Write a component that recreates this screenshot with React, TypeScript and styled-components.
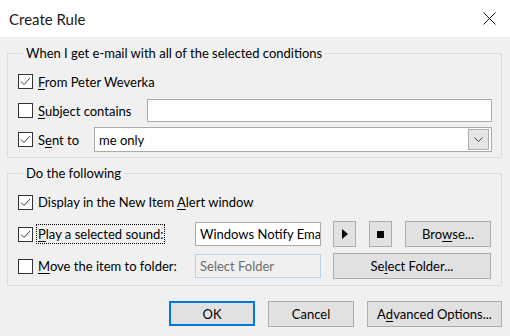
import React from 'react';
import styled, { createGlobalStyle } from 'styled-components';

const GlobalStyle = createGlobalStyle`
  html, body {
    margin: 0;
    padding: 0;
    background: #f0f0f0;
  }
  body {
    font-family: Lato, "Noto Sans", sans-serif;
    font-size: 13px;
    color: #000000;
  }
`;

const Window = styled.div`
  display: flex;
  flex-direction: column;
  width: 510px;
  height: 336px;
  background: #f0f0f0;
  overflow: hidden;
`;

const TitleBar = styled.div`
  display: flex;
  align-items: center;
  justify-content: space-between;
  height: 37px;
  padding: 0 14px 0 9px;
  background: #ffffff;
  font-size: 15px;
  color: #1a1a1a;
`;

const CloseIcon = styled.svg`
  width: 13px;
  height: 13px;
`;

const Body = styled.div`
  display: flex;
  flex-direction: column;
  gap: 6px;
  padding: 7px 8px 0 7px;
`;

const Group = styled.fieldset<{ $pad: string }>`
  margin: 0;
  padding: ${(p) => p.$pad};
  border: 1px solid #dcdcdc;
  min-width: 0;
`;

const Legend = styled.legend`
  height: 18px;
  line-height: 18px;
  margin-left: 5px;
  padding: 0 3px 0 3px;
`;

const Stack = styled.div`
  display: flex;
  flex-direction: column;
  gap: 4px;
`;

const Row = styled.div`
  display: flex;
  align-items: center;
  height: 25px;
`;

const Box = styled.span`
  display: inline-flex;
  align-items: center;
  justify-content: center;
  flex: none;
  width: 13px;
  height: 13px;
  border: 1px solid #333333;
  background: #ffffff;
`;

const CheckLabel = styled.label<{ $w?: number }>`
  display: inline-flex;
  align-items: center;
  flex: none;
  gap: 4px;
  width: ${(p) => (p.$w ? `${p.$w}px` : 'auto')};
  white-space: nowrap;
`;

const LabelText = styled.span<{ $focus?: boolean }>`
  padding: 1px 1px;
  outline: ${(p) => (p.$focus ? '1px dotted #000000' : 'none')};
`;

const Key = styled.span`
  text-decoration: underline;
  text-underline-offset: 2px;
`;

const TextField = styled.div`
  display: flex;
  align-items: center;
  flex: 1;
  height: 23px;
  padding-left: 4px;
  border: 1px solid #ababab;
  background: #ffffff;
  box-sizing: border-box;
`;

const Combo = styled(TextField)`
  height: 25px;
  padding-right: 2px;
  justify-content: space-between;
`;

const DropButton = styled.span`
  display: flex;
  align-items: center;
  justify-content: center;
  width: 21px;
  height: 21px;
  box-sizing: border-box;
  border: 1px solid #adadad;
  background: #e5e5e5;
`;

const ActionGrid = styled.div`
  display: grid;
  grid-template-columns: 165px 126px 158px;
  column-gap: 12px;
  row-gap: 6px;
  grid-auto-rows: 26px;
  align-items: center;
`;

const FullRow = styled.div`
  grid-column: 1 / -1;
  display: flex;
  align-items: center;
`;

const SmallField = styled.div<{ $disabled?: boolean }>`
  display: flex;
  align-items: center;
  height: 24px;
  padding-left: 4px;
  box-sizing: border-box;
  border: 1px solid ${(p) => (p.$disabled ? '#b9d1ea' : '#ababab')};
  background: ${(p) => (p.$disabled ? '#f0f0f0' : '#ffffff')};
  color: ${(p) => (p.$disabled ? '#6d6d6d' : '#000000')};
  white-space: nowrap;
  overflow: hidden;
`;

const ButtonSet = styled.div`
  display: flex;
  gap: 13px;
`;

const Button = styled.button<{ $w: number; $primary?: boolean }>`
  display: flex;
  align-items: center;
  justify-content: center;
  width: ${(p) => p.$w}px;
  height: ${(p) => (p.$primary ? 25 : 26)}px;
  padding: 0;
  box-sizing: border-box;
  border: ${(p) => (p.$primary ? '2px solid #0078d7' : '1px solid #adadad')};
  background: #e1e1e1;
  font: inherit;
  color: #000000;
`;

const Footer = styled.div`
  display: flex;
  justify-content: flex-end;
  gap: 13px;
  padding: 15px 8px 0 0;
`;

const Check = () => (
  <svg width="11" height="11" viewBox="0 0 11 11">
    <polyline points="1,5.5 4,8.5 10,2" fill="none" stroke="#404040" strokeWidth="1" />
  </svg>
);

const CheckBox = ({ checked }: { checked?: boolean }) => <Box>{checked && <Check />}</Box>;

export default function App() {
  return (
    <Window>
      <GlobalStyle />
      <TitleBar>
        <span>Create Rule</span>
        <CloseIcon viewBox="0 0 13 13">
          <path d="M0.5 0.5 L12.5 12.5 M12.5 0.5 L0.5 12.5" stroke="#111111" strokeWidth="1" />
        </CloseIcon>
      </TitleBar>
      <Body>
        <Group $pad="7px 9px 5px 10px">
          <Legend>When I get e-mail with all of the selected conditions</Legend>
          <Stack>
            <Row>
              <CheckLabel>
                <CheckBox checked />
                <LabelText>
                  <Key>F</Key>rom Peter Weverka
                </LabelText>
              </CheckLabel>
            </Row>
            <Row>
              <CheckLabel $w={129}>
                <CheckBox />
                <LabelText>
                  <Key>S</Key>ubject contains
                </LabelText>
              </CheckLabel>
              <TextField />
            </Row>
            <Row>
              <CheckLabel $w={76}>
                <CheckBox checked />
                <LabelText>
                  S<Key>e</Key>nt to
                </LabelText>
              </CheckLabel>
              <Combo>
                <span>me only</span>
                <DropButton>
                  <svg width="9" height="5" viewBox="0 0 9 5">
                    <polyline points="0.5,0.5 4.5,4.5 8.5,0.5" fill="none" stroke="#444444" strokeWidth="1" />
                  </svg>
                </DropButton>
              </Combo>
            </Row>
          </Stack>
        </Group>
        <Group $pad="7px 9px 6px 10px">
          <Legend>Do the following</Legend>
          <ActionGrid>
            <FullRow>
              <CheckLabel>
                <CheckBox checked />
                <LabelText>
                  Display in the New Item <Key>A</Key>lert window
                </LabelText>
              </CheckLabel>
            </FullRow>
            <CheckLabel>
              <CheckBox checked />
              <LabelText $focus>
                <Key>P</Key>lay a selected sound:
              </LabelText>
            </CheckLabel>
            <SmallField>Windows Notify Email</SmallField>
            <ButtonSet>
              <Button $w={23} type="button">
                <svg width="6" height="10" viewBox="0 0 6 10">
                  <polygon points="0,0 6,5 0,10" fill="#000000" />
                </svg>
              </Button>
              <Button $w={23} type="button">
                <svg width="7" height="7" viewBox="0 0 7 7">
                  <rect width="7" height="7" fill="#000000" />
                </svg>
              </Button>
              <Button $w={86} type="button">
                Bro<Key>w</Key>se...
              </Button>
            </ButtonSet>
            <CheckLabel>
              <CheckBox />
              <LabelText>
                <Key>M</Key>ove the item to folder:
              </LabelText>
            </CheckLabel>
            <SmallField $disabled>Select Folder</SmallField>
            <Button $w={158} type="button">
              Se<Key>l</Key>ect Folder...
            </Button>
          </ActionGrid>
        </Group>
      </Body>
      <Footer>
        <Button $w={86} $primary type="button">
          OK
        </Button>
        <Button $w={86} type="button">
          Cancel
        </Button>
        <Button $w={135} type="button">
          A<Key>d</Key>vanced Options...
        </Button>
      </Footer>
    </Window>
  );
}
